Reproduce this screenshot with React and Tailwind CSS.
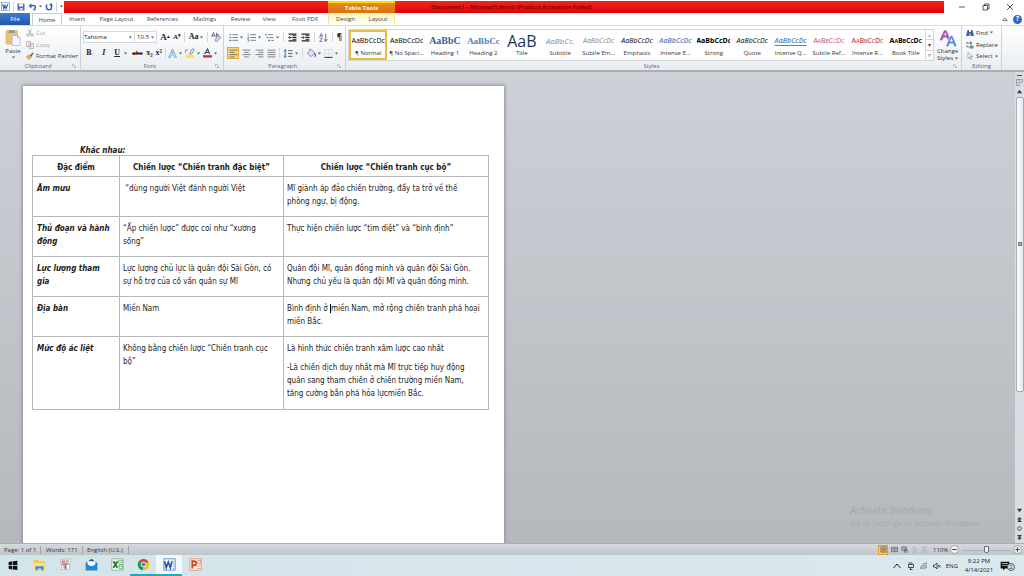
import React from "react";

const Svg = ({ children, className = "w-3 h-3", box = "0 0 16 16" }) => (
  <svg viewBox={box} className={`shrink-0 ${className}`} fill="none" aria-hidden="true">
    {children}
  </svg>
);

const Caret = () => (
  <Svg className="w-[3px] h-[3px]" box="0 0 6 6">
    <path d="M0 1h6L3 5z" fill="#555" />
  </Svg>
);

const Launcher = () => (
  <Svg className="w-1 h-1" box="0 0 8 8">
    <path d="M1 6V1h5M4 4l3 3M7 4v3H4" stroke="#8a9099" />
  </Svg>
);

const Tool = ({ label, children, caret, className = "h-3" }) => (
  <button type="button" aria-label={label} className={`flex items-center justify-center gap-[2px] ${className}`}>
    {children}
    {caret && <Caret />}
  </button>
);

const Group = ({ name, className, children, launcher = true }) => (
  <section aria-label={name} className={`flex flex-col border-r border-[#cdd2d8] ${className}`}>
    <div className="flex flex-1 min-h-0">{children}</div>
    <div className="flex h-[8px] items-center px-1 text-[#5d6670]">
      <span className="flex-1 text-center">{name}</span>
      {launcher && <Launcher />}
    </div>
  </section>
);

const Sep = () => <span className="h-[10px] w-px bg-[#d5d9de]" />;

const tabs = [
  ["Home", "w-[30px] border border-b-0 border-[#c9cdd2] bg-[#fbfcfd]"],
  ["Insert", "w-[30px]"],
  ["Page Layout", "w-[49px]"],
  ["References", "w-[43px]"],
  ["Mailings", "w-[41px]"],
  ["Review", "w-[31px]"],
  ["View", "w-[26px]"],
  ["Foxit PDF", "w-[46px]"],
  ["Design", "w-[34px] bg-linear-to-b from-[#fdf3b0] to-white border-l border-[#f0e0b0]"],
  ["Layout", "w-[33px] bg-linear-to-b from-[#fdf3b0] to-white border-r border-[#f0e0b0]"],
];

const styles = [
  ["AaBbCcDc", "¶ Normal", "text-[7px] text-black"],
  ["AaBbCcDc", "¶ No Spaci...", "text-[7px] text-black"],
  ["AaBbC", "Heading 1", "text-[10px] font-bold text-[#365f91] font-['Liberation_Serif',serif]"],
  ["AaBbCc", "Heading 2", "text-[9px] font-bold text-[#4f81bd] font-['Liberation_Serif',serif]"],
  ["AaB", "Title", "text-[16px] text-[#17365d]"],
  ["AaBbCc.", "Subtitle", "text-[8px] italic text-[#6a93c8]"],
  ["AaBbCcDc", "Subtle Em...", "text-[7px] italic text-[#888]"],
  ["AaBbCcDc", "Emphasis", "text-[7px] italic text-black"],
  ["AaBbCcDc", "Intense E...", "text-[7px] italic font-semibold text-[#4f81bd]"],
  ["AaBbCcDc", "Strong", "text-[7px] font-bold text-black"],
  ["AaBbCcDc", "Quote", "text-[7px] italic text-black"],
  ["AaBbCcDc", "Intense Q...", "text-[7px] italic font-semibold text-[#4f81bd] underline underline-offset-2"],
  ["AaBbCcDc", "Subtle Ref...", "text-[7px] text-[#c0504d] [font-variant:small-caps]"],
  ["AaBbCcDc", "Intense R...", "text-[7px] font-semibold text-[#c0504d] [font-variant:small-caps]"],
  ["AaBbCcDc", "Book Title", "text-[7px] font-bold text-black [font-variant:small-caps]"],
];

const rows = [
  ["Âm mưu", ["\u00a0“dùng người Việt đánh người Việt"], ["Mĩ giành áp đảo chiến trường, đẩy ta trở về thế", "phòng ngự, bị động."]],
  ["Thủ đoạn và hành động", ["“Ấp chiến lược” được coi như “xương", "sống”"], ["Thực hiện chiến lược “tìm diệt” và “bình định”"]],
  ["Lực lượng tham gia", ["Lực lượng chủ lực là quân đội Sài Gòn, có", "sự hỗ trợ của cố vấn quân sự Mĩ"], ["Quân đội Mĩ, quân đồng minh và quân đội Sài Gòn.", "Nhưng chủ yếu là quân đội Mĩ và quân đồng minh."]],
  ["Địa bàn", ["Miền Nam"], ["Bình định ở |miền Nam, mở rộng chiến tranh phá hoại", "miền Bắc."]],
];

const Lines = ({ items }) =>
  items.map((line) => {
    const [a, b] = line.split("|");
    return (
      <span key={line} className="block whitespace-nowrap">
        {a}
        {b && <span className="inline-block h-[9px] w-px bg-black align-middle" />}
        {b}
      </span>
    );
  });

const ListIcon = ({ numbered, multi }) => (
  <Svg className="w-[9px] h-[9px]">
    {numbered ? (
      <path d="M2 1v4M1 7h2v2H1v1h2M1 12h2v3H1" stroke="#355c9c" />
    ) : multi ? (
      <path d="M0 2h3v2H0zM3 7h3v2H3zM6 12h3v2H6z" fill="#355c9c" />
    ) : (
      <path d="M1 2h3v2H1zM1 7h3v2H1zM1 12h3v2H1z" fill="#355c9c" />
    )}
    <path d={multi ? "M5 3h9M8 8h7M11 13h5" : "M6 3h10M6 8h10M6 13h10"} stroke="#68707a" strokeWidth="1.5" />
  </Svg>
);

const IndentIcon = ({ flip }) => (
  <Svg className="w-[9px] h-[9px]">
    <path d="M1 2h14M8 5h7M8 8h7M8 11h7M1 14h14" stroke="#222" strokeWidth="1.8" />
    <path d={flip ? "M0 8h6M3 5l3 3-3 3" : "M7 8H1M4 5L1 8l3 3"} stroke="#24508f" strokeWidth="1.6" />
  </Svg>
);

const AlignIcon = ({ d }) => (
  <Svg className="w-[9px] h-[9px]">
    <path d={d} stroke="#6a6f76" strokeWidth="1.5" />
  </Svg>
);

const Clipboard = () => (
  <Group name="Clipboard" className="w-[81px]">
    <button type="button" className="flex w-[26px] flex-col items-center pt-[3px] text-[#333]">
      <Svg className="w-4 h-[17px]" box="0 0 32 34">
        <rect x="2" y="3" width="23" height="27" rx="2" fill="#eac37a" stroke="#c99a49" />
        <path d="M8 5V2h11v3l2 3H6z" fill="#8f98a3" />
        <path d="M14 13h11l5 5v15H14z" fill="#f5f8ff" stroke="#7c92c0" />
        <path d="M25 13v5h5" stroke="#7c92c0" />
      </Svg>
      <span className="leading-[10px]">Paste</span>
      <Caret />
    </button>
    <div className="flex flex-col pt-px text-[#a4a8ad]">
      <Tool label="Cut" className="h-3 justify-start gap-1">
        <Svg className="w-2 h-2">
          <path d="M5 1l5 9M11 1L6 10" stroke="#999" strokeWidth="1.5" />
          <circle cx="4" cy="12" r="2.5" stroke="#999" strokeWidth="1.5" />
          <circle cx="12" cy="12" r="2.5" stroke="#999" strokeWidth="1.5" />
        </Svg>
        <span>Cut</span>
      </Tool>
      <Tool label="Copy" className="h-3 justify-start gap-1">
        <Svg className="w-2 h-2">
          <path d="M1 1h8v10H1zM6 5h9v10H6z" fill="#eee" stroke="#aaa" strokeWidth="1.5" />
          <path d="M8 8h5M8 11h5" stroke="#aaa" />
        </Svg>
        <span>Copy</span>
      </Tool>
      <Tool label="Format Painter" className="h-3 justify-start text-[#333]">
        <Svg className="w-2 h-2">
          <path d="M1 9l6-3 4 4-5 5z" fill="#e8b93c" stroke="#a07418" />
          <path d="M8 7l5-6 2 1-4 7z" fill="#4b5f86" />
        </Svg>
        <span className="whitespace-nowrap">Format Painter</span>
      </Tool>
    </div>
  </Group>
);

const FontGroup = () => (
  <Group name="Font" className="w-[143px]">
    <div className="flex flex-1 flex-col gap-1 px-[2px] pt-[5px] text-[#222]">
      <div className="flex h-3 items-center justify-between">
        <div className="flex items-center">
          <div className="flex h-[12px] w-[52px] items-center border border-[#d3d8de] bg-white pr-[2px]">
            <select aria-label="Font name" className="min-w-0 flex-1 appearance-none bg-transparent text-[6px] leading-[10px]">
              <option>Tahoma</option>
            </select>
            <Caret />
          </div>
          <div className="flex h-[12px] w-[22px] items-center border border-l-0 border-[#d3d8de] bg-white px-[2px]">
            <select aria-label="Font size" className="min-w-0 flex-1 appearance-none bg-transparent text-[6px] leading-[10px]">
              <option>10.5</option>
            </select>
            <Caret />
          </div>
        </div>
        <Tool label="Grow font"><span className="font-['Liberation_Serif',serif] text-[9px] font-bold">A<sup className="text-[5px]">▴</sup></span></Tool>
        <Tool label="Shrink font"><span className="font-['Liberation_Serif',serif] text-[7px] font-bold">A<sup className="text-[5px]">▾</sup></span></Tool>
        <Sep />
        <Tool label="Change case" caret><span className="font-['Liberation_Serif',serif] text-[8px] font-bold">Aa</span></Tool>
        <Sep />
        <Tool label="Clear formatting">
          <Svg className="w-[10px] h-[10px]">
            <path d="M1 8l3-7 3 7M2 6h4M9 1v7h3V4H9" stroke="#45536b" strokeWidth="1.3" />
            <path d="M6 12l6-6 4 3-6 6H7z" fill="#c8d4ee" stroke="#6079ad" />
          </Svg>
        </Tool>
      </div>
      <div className="flex h-3 items-center justify-between pr-1 font-['Liberation_Serif',serif] text-[8px]">
        <Tool label="Bold" className="h-3 w-3"><b>B</b></Tool>
        <Tool label="Italic" className="h-3 w-3"><i className="font-bold">I</i></Tool>
        <Tool label="Underline" caret className="h-3 w-4"><u className="mr-[2px] font-bold">U</u></Tool>
        <Tool label="Strikethrough" className="h-3 w-3"><s className="text-[7px] font-bold">abc</s></Tool>
        <Tool label="Subscript"><b>x₂</b></Tool>
        <Tool label="Superscript"><b>x²</b></Tool>
        <Sep />
        <Tool label="Text effects" caret>
          <Svg className="w-[9px] h-[9px]"><path d="M1 15L7 1h2l6 14h-3l-1.500-4h-5L4 15zM6.500 8h3L8 4z" fill="#e5f1ff" stroke="#5b9fdb" strokeWidth="1.3" /></Svg>
        </Tool>
        <Tool label="Highlight" caret>
          <Svg className="w-[10px] h-[10px]">
            <path d="M1 11h13v5H1z" fill="#f8ee28" />
            <path d="M7 9l5-8 3 2-5 7z" fill="#e4e9f2" stroke="#4d5e80" />
            <path d="M1 8V3h4" stroke="#4d5e80" />
          </Svg>
        </Tool>
        <Tool label="Font color" caret>
          <Svg className="w-[9px] h-[10px]">
            <path d="M3 10L8 1l4 9M5 7h6" stroke="#294a80" strokeWidth="2" />
            <path d="M0 12h16v4H0z" fill="#dc1f1f" />
          </Svg>
        </Tool>
      </div>
    </div>
  </Group>
);

const Paragraph = () => (
  <Group name="Paragraph" className="w-[122px]">
    <div className="flex flex-1 flex-col gap-1 px-[3px] pt-[5px]">
      <div className="flex h-3 items-center justify-between pl-[2px]">
        <Tool label="Bullets" caret><ListIcon /></Tool>
        <Tool label="Numbering" caret><ListIcon numbered /></Tool>
        <Tool label="Multilevel list" caret><ListIcon multi /></Tool>
        <Sep />
        <Tool label="Decrease indent"><IndentIcon /></Tool>
        <Tool label="Increase indent"><IndentIcon flip /></Tool>
        <Sep />
        <Tool label="Sort">
          <Svg className="w-[9px] h-[9px]">
            <path d="M1 7l3-6 3 6M2 5h4" stroke="#355c9c" strokeWidth="1.3" />
            <path d="M1 9h5l-5 6h5" stroke="#8a3b8a" strokeWidth="1.3" />
            <path d="M12 1v13M9 11l3 4 3-4" stroke="#444" strokeWidth="1.3" />
          </Svg>
        </Tool>
        <Sep />
        <Tool label="Show marks"><span className="text-[8px] font-bold text-[#333]">¶</span></Tool>
      </div>
      <div className="flex h-3 items-center justify-between">
        <Tool label="Align left" className="h-3 w-3 border border-[#e0a93b] bg-[#fcd66f]"><AlignIcon d="M1 2h14M1 6h9M1 10h14M1 14h9" /></Tool>
        <Tool label="Center"><AlignIcon d="M1 2h14M4 6h8M1 10h14M4 14h8" /></Tool>
        <Tool label="Align right"><AlignIcon d="M1 2h14M6 6h9M1 10h14M6 14h9" /></Tool>
        <Tool label="Justify"><AlignIcon d="M1 2h14M1 6h14M1 10h14M1 14h14" /></Tool>
        <Sep />
        <Tool label="Line spacing" caret>
          <Svg className="w-[10px] h-[9px]">
            <path d="M3 2v12M1 4l2-3 2 3M1 12l2 3 2-3" stroke="#2a57a0" strokeWidth="1.5" />
            <path d="M8 3h8M8 8h8M8 13h8" stroke="#555" strokeWidth="1.6" />
          </Svg>
        </Tool>
        <Sep />
        <Tool label="Shading" caret>
          <Svg className="w-[10px] h-[10px]">
            <path d="M2 8l6-6 6 6-6 6z" fill="#dbe5f4" stroke="#3f5f96" />
            <path d="M13 8c2 2 3 4 1 6" stroke="#2f6fc4" strokeWidth="2" />
            <path d="M6 4V1" stroke="#555" />
          </Svg>
        </Tool>
        <Tool label="Borders" caret className="h-3 pr-1">
          <Svg className="w-[9px] h-[9px]">
            <path d="M1 1h14v14H1zM8 1v14M1 8h14" stroke="#b9bdc3" strokeDasharray="1 1" />
            <path d="M1 15h14" stroke="#444" strokeWidth="2" />
          </Svg>
        </Tool>
      </div>
    </div>
  </Group>
);

const StylesGroup = () => (
  <Group name="Styles" className="min-w-0 flex-1">
    <div className="flex min-w-0 flex-1 pl-[2px] pt-[3px]">
      <div className="flex h-8 min-w-0 flex-1 border border-[#d3d7dc] bg-white">
        <div className="grid min-w-0 flex-1 grid-cols-15">
          {styles.map(([sample, name, cls], i) => (
            <button
              key={name}
              type="button"
              className={`flex min-w-0 flex-col items-center justify-end border-2 ${i === 0 ? "border-[#eebb3c]" : "border-transparent"}`}
            >
              <span className={`flex h-4 w-[33px] items-center justify-center overflow-hidden whitespace-nowrap leading-[16px] ${cls}`}>{sample}</span>
              <span className="whitespace-nowrap leading-[9px] text-[#333]">{name}</span>
            </button>
          ))}
        </div>
        <div className="flex w-[8px] flex-col divide-y divide-[#d3d7dc] border-l border-[#d3d7dc]">
          {["▴", "▾", "▿"].map((g, i) => (
            <button key={g} type="button" aria-label={["Scroll up", "Scroll down", "More styles"][i]} className={`flex-1 text-[6px] leading-[8px] ${i === 0 ? "text-[#bbb]" : "text-[#444]"}`}>{g}</button>
          ))}
        </div>
      </div>
      <button type="button" className="flex w-[27px] flex-col items-center text-[#333]">
        <Svg className="mb-px w-[18px] h-[18px]" box="0 0 32 32">
          <path d="M1 20L9 2h4l8 18h-5l-2-5H8l-2 5zM9 11h4l-2-5z" fill="#a95bb5" />
          <path d="M12 31l8-19h4l8 19h-5l-2-5h-6l-2 5zM20 22h4l-2-5z" fill="#4d86d4" stroke="#fff" />
        </Svg>
        <span className="leading-[7px]">Change</span>
        <span className="flex items-center gap-[2px] leading-[7px]">Styles <Caret /></span>
      </button>
    </div>
  </Group>
);

const Editing = () => (
  <Group name="Editing" className="w-[40px]" launcher={false}>
    <div className="flex flex-col items-start pl-1 pt-px text-[#333]">
      <Tool label="Find" caret>
        <Svg className="w-2 h-2">
          <path d="M3 2h3v4h4V2h3l3 12H9V9H7v5H0z" fill="#3d62a3" />
        </Svg>
        <span>Find</span>
      </Tool>
      <Tool label="Replace">
        <Svg className="w-2 h-2">
          <path d="M1 6l2-4 2 4M8 1v5h3V3H8M2 8v4h4" stroke="#444" strokeWidth="1.3" />
          <path d="M7 9h8v6H7z" fill="#5fa05b" />
        </Svg>
        <span>Replace</span>
      </Tool>
      <Tool label="Select" caret>
        <Svg className="w-2 h-2"><path d="M4 1v12l3-3 2 5 2-1-2-5h4z" fill="#fff" stroke="#51637f" /></Svg>
        <span>Select</span>
      </Tool>
    </div>
  </Group>
);

const TitleBar = () => (
  <header className="flex h-[13px] bg-white">
    <div className="flex w-16 items-center gap-[3px] pl-px">
      <Svg className="w-[9px] h-[9px]">
        <rect x="1" y="1" width="14" height="14" fill="#fff" stroke="#4f83c4" />
        <path d="M3 4l2 8 2-6 2 6 3-8" stroke="#2862ae" strokeWidth="2" />
      </Svg>
      <Sep />
      <Tool label="Save">
        <Svg className="w-2 h-2"><path d="M1 1h14v14H1z" fill="#5a64b8" /><path d="M4 1h8v6H4z" fill="#f4f6ff" /><path d="M5 10h7v5H5z" fill="#c4cbe8" /></Svg>
      </Tool>
      <Tool label="Undo" caret>
        <Svg className="w-[9px] h-2"><path d="M3 5h7c5 0 5 7 0 9" stroke="#2c62bd" strokeWidth="3" /><path d="M0 6l6-5v10z" fill="#2c62bd" /></Svg>
      </Tool>
      <Tool label="Redo">
        <Svg className="w-2 h-2"><path d="M3 3v6c0 6 10 6 10 0V4" stroke="#2c62bd" strokeWidth="3" /><path d="M8 5h8l-4-5z" fill="#2c62bd" /></Svg>
      </Tool>
      <Sep />
      <Caret />
    </div>
    <div className="mt-px flex min-w-0 flex-1 items-center bg-linear-to-b from-[#f02222] to-[#e20000]">
      <div className="w-[264px]" />
      <div className="flex h-full w-[67px] items-center justify-center border-t-2 border-[#ffd800] bg-linear-to-b from-[#e08a1c] to-[#df6c18] font-bold text-[#fff3d6]">Table Tools</div>
      <h1 className="whitespace-nowrap pl-9 font-semibold text-[#700000]">Document1 - Microsoft Word (Product Activation Failed)</h1>
    </div>
    <div className="flex w-20 items-center justify-between pl-[14px] pr-[10px]">
      <Tool label="Minimize"><Svg className="w-2 h-2"><path d="M2 8h12" stroke="#222" strokeWidth="1.500" /></Svg></Tool>
      <Tool label="Restore"><Svg className="w-2 h-2"><path d="M2 5h9v9H2zM5 5V2h9v9h-3" stroke="#222" strokeWidth="1.500" /></Svg></Tool>
      <Tool label="Close"><Svg className="w-2 h-2"><path d="M2 2l12 12M14 2L2 14" stroke="#222" strokeWidth="1.500" /></Svg></Tool>
    </div>
  </header>
);

const Document = () => (
  <article className="ml-[23px] mt-[14px] flex w-[481px] flex-col bg-white px-[9px] pt-[61px] text-[8px] leading-[13px] text-[#1c1c1c] shadow-[0_0_3px_1px_#8e9299] font-['DejaVu_Sans_Condensed','DejaVu_Sans',sans-serif]">
    <h2 className="pl-12 text-[8px] font-bold italic leading-[8px]">Khác nhau:</h2>
    <table className="w-[457px] table-fixed border-collapse [&_td]:border [&_td]:border-[#b5b7ba] [&_th]:border [&_th]:border-[#b5b7ba] [&_td]:px-[3px] [&_td]:pt-[5px] [&_td]:align-top [&_thead_th]:pt-[2px] [&_tbody_th]:px-1 [&_tbody_th]:pt-[5px] [&_tbody_th]:text-left [&_tbody_th]:align-top [&_tbody_th]:italic">
      <colgroup>
        <col className="w-[87px]" />
        <col className="w-[164px]" />
        <col />
      </colgroup>
      <thead>
        <tr className="h-[21px]">
          <th scope="col">Đặc điểm</th>
          <th scope="col" className="whitespace-nowrap">Chiến lược “Chiến tranh đặc biệt”</th>
          <th scope="col" className="whitespace-nowrap">Chiến lược “Chiến tranh cục bộ”</th>
        </tr>
      </thead>
      <tbody>
        {rows.map(([head, a, b]) => (
          <tr key={head} className="h-10">
            <th scope="row"><span className="block max-w-[76px]">{head}</span></th>
            <td><Lines items={a} /></td>
            <td><Lines items={b} /></td>
          </tr>
        ))}
        <tr className="h-[73px]">
          <th scope="row">Mức độ ác liệt</th>
          <td><Lines items={["Không bằng chiến lược “Chiến tranh cục", "bộ”"]} /></td>
          <td>
            <p className="mb-[6px]"><Lines items={["Là hình thức chiến tranh xâm lược cao nhất"]} /></p>
            <p><Lines items={["-Là chiến dịch duy nhất mà Mĩ trực tiếp huy động", "quân sang tham chiến ở chiến trường miền Nam,", "tăng cường bắn phá hỏa lựcmiền Bắc."]} /></p>
          </td>
        </tr>
      </tbody>
    </table>
  </article>
);

const ScrollBar = () => (
  <div className="flex w-[9px] flex-col items-center gap-[3px] bg-[#d9dce2] pb-[2px] pt-[3px]" aria-hidden="true">
    <span className="h-px w-[5px] bg-[#555]" />
    <Svg className="w-[7px] h-[7px]"><path d="M1 1h14v6H7v8H1zM4 1v3M8 1v3M1 8h3" stroke="#7a808a" strokeWidth="1.500" /></Svg>
    <Svg className="w-[5px] h-[5px]" box="0 0 6 6"><path d="M0 5h6L3 1z" fill="#333" /></Svg>
    <div className="flex w-[8px] flex-[298] items-center justify-center rounded-[2px] border border-[#a6abb5] bg-linear-to-r from-white to-[#e3e6ec]">
      <span className="h-1 w-1 border border-[#777] bg-[#aaa]" />
    </div>
    <div className="flex-[112]" />
    <Svg className="w-[5px] h-[5px]" box="0 0 6 6"><path d="M0 1h6L3 5z" fill="#333" /></Svg>
    <Svg className="w-[5px] h-[7px]" box="0 0 6 8"><path d="M0 4l3-3 3 3zM0 7l3-3 3 3z" fill="#333" /></Svg>
    <Svg className="w-[5px] h-[5px]" box="0 0 6 6"><circle cx="3" cy="3" r="2.200" stroke="#444" /></Svg>
    <Svg className="w-[5px] h-[7px]" box="0 0 6 8"><path d="M0 1l3 3 3-3zM0 4l3 3 3-3z" fill="#333" /></Svg>
  </div>
);

const ViewIcon = ({ dim, d = "M2 2h12v12H2zM4 5h8M4 8h8M4 11h8" }) => (
  <Svg className="w-[7px] h-[7px]"><path d={d} stroke={dim ? "#a7acb3" : "#4e5763"} strokeWidth="1.600" /></Svg>
);

const StatusBar = () => (
  <footer className="flex h-3 items-center border-t border-[#a8adb4] bg-linear-to-b from-[#d6dade] to-[#bfc4ca] text-[#333]">
    <span className="w-[41px] border-r border-[#9fa5ac] pl-[4px]">Page: 1 of 1</span>
    <span className="w-[42px] border-r border-[#9fa5ac] pl-[5px]">Words: 171</span>
    <span className="w-[46px] whitespace-nowrap border-r border-[#9fa5ac] pl-[4px]">English (U.S.)</span>
    <div className="ml-auto flex items-center gap-[3px] pr-[2px]">
      <Tool label="Print layout" className="h-[10px] w-[10px] border border-[#d99f28] bg-[#fbd063]"><ViewIcon /></Tool>
      <Tool label="Full screen reading"><ViewIcon d="M1 3h6v10H1zM9 3h6v10H9zM3 6h2M3 9h2M11 6h2M11 9h2" /></Tool>
      <Tool label="Web layout"><ViewIcon d="M2 2h10v8H2zM4 5h6M8 8h6v6H8z" /></Tool>
      <Tool label="Outline"><ViewIcon dim d="M2 3h8M5 7h9M5 11h9M2 14h11" /></Tool>
      <Tool label="Draft"><ViewIcon dim d="M2 3h12M2 7h12M2 11h12M2 14h8" /></Tool>
      <span className="w-4 pl-[2px]">110%</span>
      <Tool label="Zoom out"><Svg className="w-[9px] h-[9px]"><circle cx="8" cy="8" r="7" fill="#f4f6f8" stroke="#70767e" /><path d="M4 8h8" stroke="#444" strokeWidth="2" /></Svg></Tool>
      <input type="range" aria-label="Zoom" defaultValue="52" className="h-[8px] w-12 appearance-none bg-linear-to-b from-transparent from-45% via-[#7c828a] via-50% to-transparent to-60% [&::-webkit-slider-thumb]:h-[7px] [&::-webkit-slider-thumb]:w-[5px] [&::-webkit-slider-thumb]:appearance-none [&::-webkit-slider-thumb]:rounded-b-[2px] [&::-webkit-slider-thumb]:border [&::-webkit-slider-thumb]:border-[#666c74] [&::-webkit-slider-thumb]:bg-[#f2f4f6]" />
      <Tool label="Zoom in"><Svg className="w-[9px] h-[9px]"><circle cx="8" cy="8" r="7" fill="#f4f6f8" stroke="#70767e" /><path d="M4 8h8M8 4v8" stroke="#444" strokeWidth="2" /></Svg></Tool>
    </div>
  </footer>
);

const apps = [
  ["Start", <path d="M1 3l6-1v6H1zM8 2l7-1v7H8zM1 9h6v6l-6-1zM8 9h7v7l-7-1z" fill="#111" />],
  ["File Explorer", <><path d="M1 2h5l2 2h7v11H1z" fill="#f3c74c" /><path d="M1 6h14v9H1z" fill="#fadf86" /><path d="M3 10h10v5h-3v-2H6v2H3z" fill="#3f8fd2" /></>],
  ["Unikey", <><path d="M2 2h5v5H2zM9 1h5v5H9zM3 9h4v5H3zM9 8h4v6H9z" fill="#fff" stroke="#b5b5bd" /><path d="M4 3v3M6 3v3M11 2v3M4 8l7-1M8 8v6M5 11h2" stroke="#cf5050" strokeWidth="1.300" /></>],
  ["Mail", <><path d="M1 6l7-5 7 5v9H1z" fill="#0f5fa8" /><path d="M3 4h10v6H3z" fill="#fff" /><path d="M1 6l7 5 7-5v9H1z" fill="#1d8bd8" /></>],
  ["Excel", <><path d="M1 1h14v14H1z" fill="#f3faf3" stroke="#79b681" /><path d="M3 4l5 8M8 4l-5 8" stroke="#1e7a35" strokeWidth="2.200" /><path d="M9 3h5v3H9zM10 8h4v5h-4zM10 10h4" stroke="#62ad6c" /></>],
  ["Chrome", <><circle cx="8" cy="8" r="7" fill="#f4c20d" /><path d="M8 8L2 4.500A7 7 0 0114 4.500z" fill="#db4437" /><path d="M8 8L2 4.400A7 7 0 007 15z" fill="#0f9d58" /><circle cx="8" cy="8" r="3.400" fill="#fff" /><circle cx="8" cy="8" r="2.600" fill="#4285f4" /></>],
  ["Word", <><path d="M1 1h14v14H1z" fill="#f4f8ff" stroke="#4d83c8" /><path d="M2 4l2 8 2.500-7L9 12l2-8" stroke="#1f57a8" strokeWidth="2" /><path d="M12 4h2M12 7h2M12 10h2M12 13h2" stroke="#6c98d2" /></>],
  ["PowerPoint", <><path d="M1 1h14v14H1z" fill="#fff5f0" stroke="#e08a66" /><path d="M4 13V4h2c4 0 4 5 0 5H4" stroke="#d0451b" strokeWidth="2.200" /><path d="M11 3h3v4h-3zM10 10h4M10 13h4" stroke="#e38a63" /></>],
];

const Taskbar = () => (
  <nav aria-label="Taskbar" className="flex h-[21px] items-stretch bg-linear-to-r from-[#d3e4ea] to-[#dbe9ee] text-[#222]">
    {apps.map(([name, icon]) => (
      <button
        key={name}
        type="button"
        aria-label={name}
        className={`flex w-[26px] items-center justify-center border-b-2 ${name === "Word" ? "border-[#16aebc] bg-[#f3f8fa]" : name === "Chrome" ? "border-[#16aebc]" : "border-transparent"}`}
      >
        <Svg className={name === "Start" ? "w-[10px] h-[10px]" : "w-[13px] h-[13px]"}>{icon}</Svg>
      </button>
    ))}
    <div className="ml-auto flex items-center gap-[5px] pr-[9px]">
      <Svg className="w-2 h-2"><path d="M1 12l7-8 7 8" stroke="#222" strokeWidth="2" /></Svg>
      <Svg className="ml-px w-2 h-2"><path d="M3 2h8M3 5h10v6H3zM7 11v4M5 15h6" stroke="#222" strokeWidth="1.600" /></Svg>
      <Svg className="w-2 h-2"><path d="M1 14c2-8 6-11 13-12M5 14c1-5 4-7 9-8M9 14c1-2 2-4 5-4" stroke="#444" strokeWidth="1.500" /></Svg>
      <Svg className="w-2 h-2"><path d="M1 6h3l4-4v12l-4-4H1zM10 6l5 5M15 6l-5 5" stroke="#222" strokeWidth="1.500" /></Svg>
      <span className="text-[6px]">ENG</span>
      <div className="w-8 text-center text-[6px] leading-[9px]">
        <div className="whitespace-nowrap">8:22 PM</div>
        <div className="whitespace-nowrap">4/14/2021</div>
      </div>
      <div className="flex items-end">
        <Svg className="w-[10px] h-[10px]"><path d="M1 1h14v11H8l-3 3v-3H1z" fill="#111" /><path d="M3 4h10M3 7h10" stroke="#e8f0f3" /></Svg>
        <span className="-ml-[3px] flex h-[8px] w-[8px] items-center justify-center rounded-full border border-[#555] bg-[#dce8ec] text-[6px]">2</span>
      </div>
    </div>
  </nav>
);

export default function App() {
  return (
    <div className="flex h-screen flex-col overflow-hidden bg-white font-['Open_Sans','Noto_Sans',sans-serif] text-[6px] leading-[8px]">
      <TitleBar />
      <nav aria-label="Ribbon tabs" className="flex h-[13px] items-stretch border-b border-[#d9dce0] bg-white text-[#444]">
        <button type="button" className="mr-[2px] w-[30px] bg-linear-to-b from-[#3c7bd0] to-[#1f56ab] text-white">File</button>
        {tabs.map(([name, cls]) => (
          <button key={name} type="button" className={`whitespace-nowrap ${cls}`}>{name}</button>
        ))}
        <div className="ml-auto flex items-center gap-[5px] pr-[2px]">
          <Tool label="Minimize ribbon"><Svg className="w-[6px] h-[6px]"><path d="M2 12l6-7 6 7z" stroke="#555" strokeWidth="2" /></Svg></Tool>
          <Tool label="Help"><span className="flex h-[9px] w-[9px] items-center justify-center rounded-full bg-[#2d68c4] text-[7px] font-bold text-white">?</span></Tool>
        </div>
      </nav>
      <div className="flex h-[46px] border-b-2 border-[#a9aeb4] bg-linear-to-b from-white to-[#e9edf1] pr-[22px]">
        <Clipboard />
        <FontGroup />
        <Paragraph />
        <StylesGroup />
        <Editing />
      </div>
      <div className="flex min-h-0 flex-1">
        <main className="relative flex min-w-0 flex-1 overflow-hidden bg-linear-to-b from-[#cdd0d6] to-[#b5b8bd]">
          <Document />
          <div className="absolute bottom-[14px] right-[34px] text-[#a5a8ad]">
            <p className="text-[10px] leading-[13px]">Activate Windows</p>
            <p className="text-[8px] leading-[12px]">Go to Settings to activate Windows.</p>
          </div>
        </main>
        <ScrollBar />
      </div>
      <StatusBar />
      <Taskbar />
    </div>
  );
}
